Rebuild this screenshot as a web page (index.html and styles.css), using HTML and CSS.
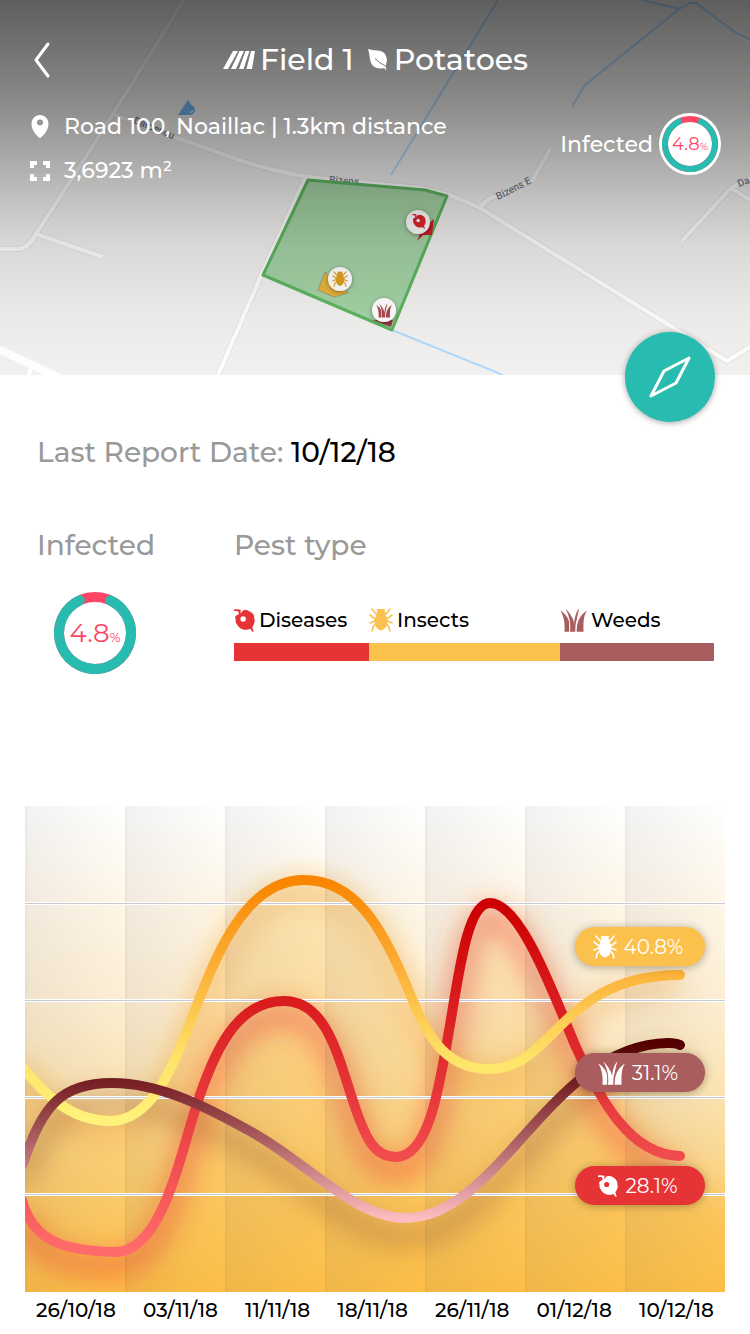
FILE: index.html
```html
<!DOCTYPE html>
<html lang="en">
<head>
<meta charset="utf-8">
<meta name="viewport" content="width=device-width, initial-scale=1">
<title>Field 1 – Potatoes</title>
<link rel="stylesheet" href="styles.css">
</head>
<body>
<svg class="sprite" aria-hidden="true">
  <symbol id="disease" viewBox="0 0 20 22">
    <path fill="currentColor" fill-rule="evenodd" d="M0 .4C2.500 0 5 0 6.400 .8L6.200 4.200C7 4 7 3 7.600 2.300C9 .8 12 .5 14.200 1.800C15.500 2.300 16 3.200 17.200 3.700C18.500 5 19.700 7 19.400 9.500C20.300 11.500 19.500 13.500 18.600 15.300C18 16.600 17.300 17 17.500 18L18.800 21.500L17.400 21.800L15.600 19C14 19.500 13 20.200 11.500 19.800C9.500 20.200 8 19.200 6.500 18.600C4.500 17.600 3.800 16.200 2.900 14.800C1.200 13 1.500 11 1.600 9.500C.6 8.500 1.200 6.500 2.800 5.800L4.400 5.300L4.400 2.600C3 1.900 1.500 2 0 2ZM8.700 6.900A2.600 2.600 0 1 0 8.700 12.100A2.600 2.600 0 1 0 8.700 6.900Z"/>
  </symbol>
  <symbol id="insect" viewBox="0 0 24 24">
    <path fill="currentColor" d="M7.600 1H16.400L15.300 2.700L16.500 5L15.600 6.300C17.800 8.300 18.400 11 18.200 14C18 18 16 21.500 12 22.500C8 21.500 6 18 5.800 14C5.600 11 6.200 8.300 8.400 6.300L7.500 5L8.700 2.700Z"/>
    <path fill="none" stroke="currentColor" stroke-width="1.600" stroke-linecap="round" stroke-linejoin="round" d="M3 1.200L7.800 6.800M21 1.200L16.200 6.800M1 7L6.500 11.300M23 7L17.500 11.300M7 12.500L1 15M17 12.500L23 15M7 15.500L4.200 18.500L3.200 23M17 15.500L19.800 18.500L20.800 23"/>
  </symbol>
  <symbol id="weeds" viewBox="0 0 26 23">
    <path fill="currentColor" d="M.3 2.300C4.500 5 8.300 9 8.800 14V22.800H4.300C5 14 3.500 7.500 .3 2.300ZM5 .2C10.500 6 13.300 11 13.600 15C14 9 15.500 3.500 18.700 .2C16.800 5.500 16.500 11 15 15.500L14.700 22.800H9.600C10.700 15 9 7 5 .2ZM25.800 2.500C22.300 8 22.500 15 22.700 22.800H16L16.300 18C17 11.500 20.500 5.500 25.800 2.500Z"/>
  </symbol>
</svg>

<header class="hero">
  <svg class="map" viewBox="0 0 750 375" preserveAspectRatio="xMidYMax slice" aria-hidden="true">
    <defs>
      <linearGradient id="shade" x1="0" y1="0" x2="0" y2="1">
        <stop offset="0" stop-opacity=".61"/>
        <stop offset=".27" stop-opacity=".43"/>
        <stop offset=".53" stop-opacity=".2"/>
        <stop offset=".66" stop-opacity=".1"/>
        <stop offset=".84" stop-opacity=".03"/>
        <stop offset="1" stop-opacity="0"/>
      </linearGradient>
      <filter id="pin-shadow" x="-50%" y="-50%" width="200%" height="200%">
        <feDropShadow dx="0" dy="1" stdDeviation="2" flood-opacity=".4"/>
      </filter>
      <path id="roads" d="M184 0L113 114L62 194L36 234Q28 249 18 249H0M113 114L160 132L245 162Q300 178 330 179L420 188Q450 193 480 208L727 361L750 347M480 208Q486 198 500 195L533 180L550 149M36 234L103 257M305 178L260 278L218 375M750 200L731 188L682 241M731 188L750 178"/>
    </defs>
    <rect width="750" height="375" fill="#f2f1f0"/>
    <g fill="none">
      <use href="#roads" stroke="#e6e5e4" stroke-width="6"/>
      <use href="#roads" stroke="#fff" stroke-width="4"/>
      <path stroke="#fff" stroke-width="8" d="M-4 348L60 378"/>
      <path stroke="#fff" stroke-width="4" d="M31 368L28 378"/>
    </g>
    <path fill="none" stroke="#b0dafd" stroke-width="2" d="M498 0L391 175M642 0L679 9L690 3H696L736 33L750 39M679 9L584 86L572 107M392 330L503 375"/>
    <path d="M188 100L178 115H187L194 109Z" fill="#6db4ee"/>
    <circle cx="190" cy="110" r="4" fill="none" stroke="#6db4ee" stroke-width="2"/>
    <g class="map-label">
      <text x="329" y="183" transform="rotate(4 329 183)">Bizens</text>
      <text x="498" y="200" transform="rotate(-27 498 200)">Bizens E</text>
      <text x="739" y="187" transform="rotate(-20 739 187)">Da</text>
      <text x="133" y="123" transform="rotate(22 133 123)">Dardenou</text>
    </g>
    <path d="M308 180L425 190L447 196L392 330L263 275Z" fill="#4caf50" fill-opacity=".47" stroke="#5db560" stroke-width="3" stroke-linejoin="round"/>
    <path d="M325 272L318 290L334 297L348 293Z" fill="#e8b53a" stroke="#a99b78" stroke-width="1"/>
    <path d="M434 219L432 235H423L417 241L422 229Z" fill="#d3202b"/>
    <path d="M373 320H393L391 327Z" fill="#9d3a48"/>
    <g filter="url(#pin-shadow)" fill="#fff"><circle cx="340" cy="279" r="12"/><circle cx="418" cy="222" r="12"/><circle cx="384" cy="310" r="12"/></g>
    <use href="#insect" x="332" y="271" width="16" height="16" color="#e0a020"/>
    <use href="#disease" x="412" y="214" width="14" height="15" color="#e0252c"/>
    <use href="#weeds" x="376" y="303" width="16" height="15" color="#a8474c"/>
    <rect width="750" height="375" fill="url(#shade)"/>
  </svg>

  <nav class="topbar">
    <button class="back" type="button" aria-label="Back">
      <svg width="20" height="40" viewBox="0 0 20 40"><path d="M16 4L4 20L16 36" fill="none" stroke="#fff" stroke-width="3" stroke-linecap="round" stroke-linejoin="round"/></svg>
    </button>
    <h1 class="title">
      <svg width="32" height="18" viewBox="0 0 32 18" fill="#fff" aria-hidden="true"><path d="M10 0H15L5 18H0ZM16.500 0H21L13 18H8ZM22.500 0H26.500L20.500 18H16ZM28 0H32L29 18H23.500Z"/></svg>
      <span>Field 1</span>
      <svg class="leaf" width="22" height="22" viewBox="0 0 22 22" aria-hidden="true"><path d="M1 0C6 2 15 0 18 5C20.500 9 20.500 13 18.500 17L19.500 21.500L17 19C13 20.500 7 19 4.500 15C2 10 3 5 1 0Z" fill="#fff"/><path d="M8 9.500Q12 14 18.500 17" fill="none" stroke="#777" stroke-width="1"/></svg>
      <span>Potatoes</span>
    </h1>
  </nav>

  <div class="facts">
    <ul class="place">
      <li><svg width="20" height="24" viewBox="0 0 20 24" aria-hidden="true"><path fill="#fff" fill-rule="evenodd" d="M10 0C15 0 18.500 4 18.500 9C18.500 15 14 20 10 23.500C6 20 1.500 15 1.500 9C1.500 4 5 0 10 0ZM10 4.500A3 3 0 1 0 10 10.500A3 3 0 1 0 10 4.500Z"/></svg>Road 100, Noaillac | 1.3km distance</li>
      <li><svg width="20" height="20" viewBox="0 0 20 20" aria-hidden="true"><path fill="none" stroke="#fff" stroke-width="4" d="M2 7V2H7M13 2H18V7M18 13V18H13M7 18H2V13"/></svg>3,6923 m²</li>
    </ul>
    <div class="infected">
      <span>Infected</span>
      <div class="ring ring-small">
        <svg viewBox="0 0 62 62" aria-hidden="true"><circle cx="31" cy="31" r="31" fill="#fff"/><circle cx="31" cy="31" r="25" fill="none" stroke="#fd4566" stroke-width="6"/><circle cx="31" cy="31" r="25" fill="none" stroke="#28bcb0" stroke-width="6" pathLength="360" stroke-dasharray="320 40" transform="rotate(-70 31 31)"/></svg>
        <span class="ring-value">4.8<small>%</small></span>
      </div>
    </div>
  </div>

  <button class="compass" type="button" aria-label="Open on map">
    <svg width="42" height="42" viewBox="0 0 42 42"><path d="M40 2L15 15L2 40L27 27Z" fill="none" stroke="#fff" stroke-width="3" stroke-linejoin="round"/></svg>
  </button>
</header>

<main>
  <p class="report">Last Report Date: <time datetime="2018-12-10">10/12/18</time></p>

  <div class="summary">
    <section>
      <h2>Infected</h2>
      <div class="ring ring-large">
        <svg viewBox="0 0 82 82" aria-hidden="true"><circle cx="41" cy="41" r="36" fill="none" stroke="#fd4566" stroke-width="10"/><circle cx="41" cy="41" r="36" fill="none" stroke="#28bcb0" stroke-width="10" stroke-linecap="round" pathLength="360" stroke-dasharray="310 50" transform="rotate(-65 41 41)"/></svg>
        <span class="ring-value">4.8<small>%</small></span>
      </div>
    </section>
    <section>
      <h2>Pest type</h2>
      <ul class="pests">
        <li class="red"><span><svg width="21" height="23" aria-hidden="true"><use href="#disease"/></svg>Diseases</span></li>
        <li class="amber"><span><svg width="24" height="24" aria-hidden="true"><use href="#insect"/></svg>Insects</span></li>
        <li class="plum"><span><svg width="27" height="24" aria-hidden="true"><use href="#weeds"/></svg>Weeds</span></li>
      </ul>
    </section>
  </div>

  <figure class="chart">
    <div class="plot">
      <svg class="curves" viewBox="25 806 700 486" preserveAspectRatio="none" role="img" aria-label="Pest levels by date">
        <defs>
          <linearGradient id="ground" x1="0" y1="0" x2="0" y2="1">
            <stop offset="0" stop-color="#fff"/>
            <stop offset=".2" stop-color="#fef6e7"/>
            <stop offset=".4" stop-color="#fdeed3"/>
            <stop offset=".6" stop-color="#fbe2b0"/>
            <stop offset=".8" stop-color="#fbd27e"/>
            <stop offset="1" stop-color="#fcc253"/>
          </linearGradient>
          <linearGradient id="stripe">
            <stop offset="0" stop-color="#445" stop-opacity=".11"/>
            <stop offset=".04" stop-color="#445" stop-opacity=".065"/>
            <stop offset="1" stop-color="#445" stop-opacity="0"/>
          </linearGradient>
          <linearGradient id="amber-line" gradientUnits="userSpaceOnUse" x1="0" y1="880" x2="0" y2="1121">
            <stop offset="0" stop-color="#f98500"/>
            <stop offset=".38" stop-color="#fcb13a"/>
            <stop offset=".75" stop-color="#fee46a"/>
            <stop offset="1" stop-color="#fff27a"/>
          </linearGradient>
          <linearGradient id="red-line" gradientUnits="userSpaceOnUse" x1="0" y1="903" x2="0" y2="1252">
            <stop offset="0" stop-color="#c00"/>
            <stop offset=".5" stop-color="#e43235"/>
            <stop offset="1" stop-color="#ff6b6b"/>
          </linearGradient>
          <linearGradient id="plum-line" gradientUnits="userSpaceOnUse" x1="0" y1="1043" x2="0" y2="1218">
            <stop offset="0" stop-color="#500"/>
            <stop offset=".25" stop-color="#7a2429"/>
            <stop offset=".55" stop-color="#ab5e61"/>
            <stop offset="1" stop-color="#fcbcc0"/>
          </linearGradient>
          <filter id="soft" filterUnits="userSpaceOnUse" x="-25" y="756" width="800" height="586"><feGaussianBlur stdDeviation="13"/></filter>
          <path id="amber-path" d="M20 1064C48 1100 75 1121 110 1121C160 1121 180 1045 205 985C228 927 258 880 304 880C355 880 382 928 405 982C424 1028 440 1069 489 1069C555 1069 560 975 680 975"/>
          <path id="red-path" d="M22 1200C32 1240 62 1251 115 1252C160 1252 178 1165 195 1110C214 1050 237 1001 284 1001C327 1001 338 1057 354 1104C366 1140 375 1157 396 1157C430 1157 440 1082 450 1025C460 966 468 903 490 903C520 903 552 990 575 1045C600 1100 630 1155 680 1156"/>
          <path id="plum-path" d="M23 1164C42 1105 62 1083 112 1083C160 1083 207 1107 255 1134C307 1163 355 1218 405 1218C500 1218 550 1045 668 1043Q676 1043 680 1045"/>
        </defs>
        <rect x="25" y="806" width="700" height="486" fill="url(#ground)"/>
        <g filter="url(#soft)" fill="#fcb938">
          <path fill-opacity=".3" d="M0 1064H20C48 1100 75 1121 110 1121C160 1121 180 1045 205 985C228 927 258 880 304 880C355 880 382 928 405 982C424 1028 440 1068 489 1068C550 1068 590 1010 680 1190L775 1230V1330H0Z"/>
          <path fill-opacity=".25" d="M0 1200H24C30 1240 62 1251 115 1252C160 1252 178 1165 195 1110C214 1050 237 1001 284 1001C327 1001 338 1057 354 1104C366 1140 375 1157 396 1157C430 1157 440 1082 450 1025C460 966 468 903 490 903C520 903 552 990 575 1045C600 1100 630 1155 680 1180H775V1330H0Z"/>
        </g>
        <g filter="url(#soft)" fill="none">
          <use href="#amber-path" y="10" stroke="#f0a030" stroke-opacity=".35" stroke-width="24"/>
          <use href="#red-path" y="14" stroke="#f04a30" stroke-opacity=".48" stroke-width="24"/>
          <use href="#plum-path" y="19" stroke="#a0602c" stroke-opacity=".4" stroke-width="22"/>
        </g>
        <g fill="url(#stripe)">
          <rect x="25" y="806" width="100" height="486"/><rect x="125" y="806" width="100" height="486"/><rect x="225" y="806" width="100" height="486"/><rect x="325" y="806" width="100" height="486"/><rect x="425" y="806" width="100" height="486"/><rect x="525" y="806" width="100" height="486"/><rect x="625" y="806" width="100" height="486"/>
        </g>
        <path stroke="#fff" stroke-width="3" d="M25 903.500H725M25 1000.500H725M25 1097.500H725M25 1194.500H725"/>
        <path stroke="#c9c9d2" stroke-width="1" d="M25 903.500H725M25 1000.500H725M25 1097.500H725M25 1194.500H725"/>
        <g fill="none" stroke-width="10" stroke-linecap="round">
          <use href="#red-path" stroke="url(#red-line)"/>
          <use href="#amber-path" stroke="url(#amber-line)"/>
          <use href="#plum-path" stroke="url(#plum-line)"/>
        </g>
      </svg>
      <span class="pill pill-amber"><svg width="24" height="24" aria-hidden="true"><use href="#insect"/></svg>40.8%</span>
      <span class="pill pill-plum"><svg width="27" height="24" aria-hidden="true"><use href="#weeds"/></svg>31.1%</span>
      <span class="pill pill-red"><svg width="20" height="22" aria-hidden="true"><use href="#disease"/></svg>28.1%</span>
    </div>
    <figcaption class="dates"><span>26/10/18</span><span>03/11/18</span><span>11/11/18</span><span>18/11/18</span><span>26/11/18</span><span>01/12/18</span><span>10/12/18</span></figcaption>
  </figure>
</main>
</body>
</html>
```
FILE: styles.css
```css
* { box-sizing: border-box; }

body {
  margin: 0;
  background: #fff;
  color: #000;
  font-family: Montserrat, Inter, "Open Sans", sans-serif;
  font-size: 20px;
  font-weight: 500;
}

h1, h2, p, ul, figure { margin: 0; padding: 0; font-weight: 500; }
ul { list-style: none; }
button { border: 0; padding: 0; cursor: pointer; }
svg { display: block; flex: none; }
.sprite { position: absolute; width: 0; height: 0; }

/* Header with map */
.hero {
  position: relative;
  min-height: 375px;
  padding: 32px 29px 0 30px;
  color: #fff;
}
.map { position: absolute; inset: 0; width: 100%; height: 100%; }
.map-label { fill: #6d7a85; font: 500 10px Roboto, sans-serif; }

.topbar {
  position: relative;
  display: grid;
  grid-template-columns: 40px 1fr 40px;
  align-items: center;
  min-height: 56px;
}
.back { padding-left: 2px; width: 24px; background: none; }
.title {
  display: flex;
  justify-content: center;
  align-items: center;
  gap: 5px;
  font-size: 30px;
  line-height: 40px;
}
.leaf { margin-left: 8px; }

.facts {
  position: relative;
  display: flex;
  justify-content: space-between;
  align-items: center;
  margin-top: 23px;
}
.place { display: grid; gap: 12px; }
.place li { display: flex; align-items: center; gap: 14px; line-height: 32px; font-size: 22px; }
.infected { display: flex; align-items: center; gap: 6px; padding-bottom: 10px; font-size: 22px; }

.ring { display: grid; place-items: center; }
.ring > * { grid-area: 1 / 1; }
.ring svg { width: 100%; }
.ring-value { z-index: 1; display: flex; align-items: baseline; color: #fd4566; font-weight: 400; }
.ring-small { width: 62px; font-size: 18px; }
.ring-small small { font-size: 10px; }
.ring-large { width: 82px; margin: 27px 0 0 17px; font-size: 26px; }
.ring-large small { font-size: 13px; }

.compass {
  position: absolute;
  right: 35px;
  bottom: -47px;
  display: grid;
  place-items: center;
  width: 90px;
  height: 90px;
  border-radius: 50%;
  background: #28bcb0;
  box-shadow: 0 1px 6px rgba(0, 0, 0, .35);
}

/* Report */
main { padding: 57px 25px 12px; }
.report { padding-left: 12px; color: #999; font-size: 28px; line-height: 40px; }
.report time { color: #000; }

.summary {
  display: grid;
  grid-template-columns: 197px 1fr;
  padding: 53px 11px 0 12px;
}
.summary h2 { color: #999; font-size: 28px; line-height: 40px; }

.pests { display: grid; grid-template-columns: 135fr 191fr 154fr; margin-top: 40px; }
.pests li { border-bottom: 18px solid; }
.pests span { display: flex; align-items: center; gap: 4px; height: 38px; padding-bottom: 8px; color: #000; }
.red, .red svg { color: #e63335; }
.amber, .amber svg { color: #fcc14c; }
.plum, .plum svg { color: #aa5d5f; }

/* Chart */
.chart { margin-top: 132px; }
.plot { position: relative; }
.curves { width: 100%; height: 486px; }

.pill {
  position: absolute;
  right: 20px;
  display: flex;
  justify-content: center;
  align-items: center;
  gap: 7px;
  width: 130px;
  height: 39px;
  padding-right: 4px;
  border-radius: 20px;
  color: #fff;
  font-size: 20px;
  font-weight: 400;
  box-shadow: 0 1px 8px rgba(60, 50, 20, .4);
}
.pill-amber { top: 121px; background: #fcc14c; }
.pill-plum { top: 247px; background: #aa5d5f; }
.pill-red { top: 360px; background: #e63335; }

.dates {
  display: flex;
  justify-content: space-between;
  padding: 6px 11px 0;
  font-size: 20px;
  font-weight: 500;
  line-height: 24px;
}
```
